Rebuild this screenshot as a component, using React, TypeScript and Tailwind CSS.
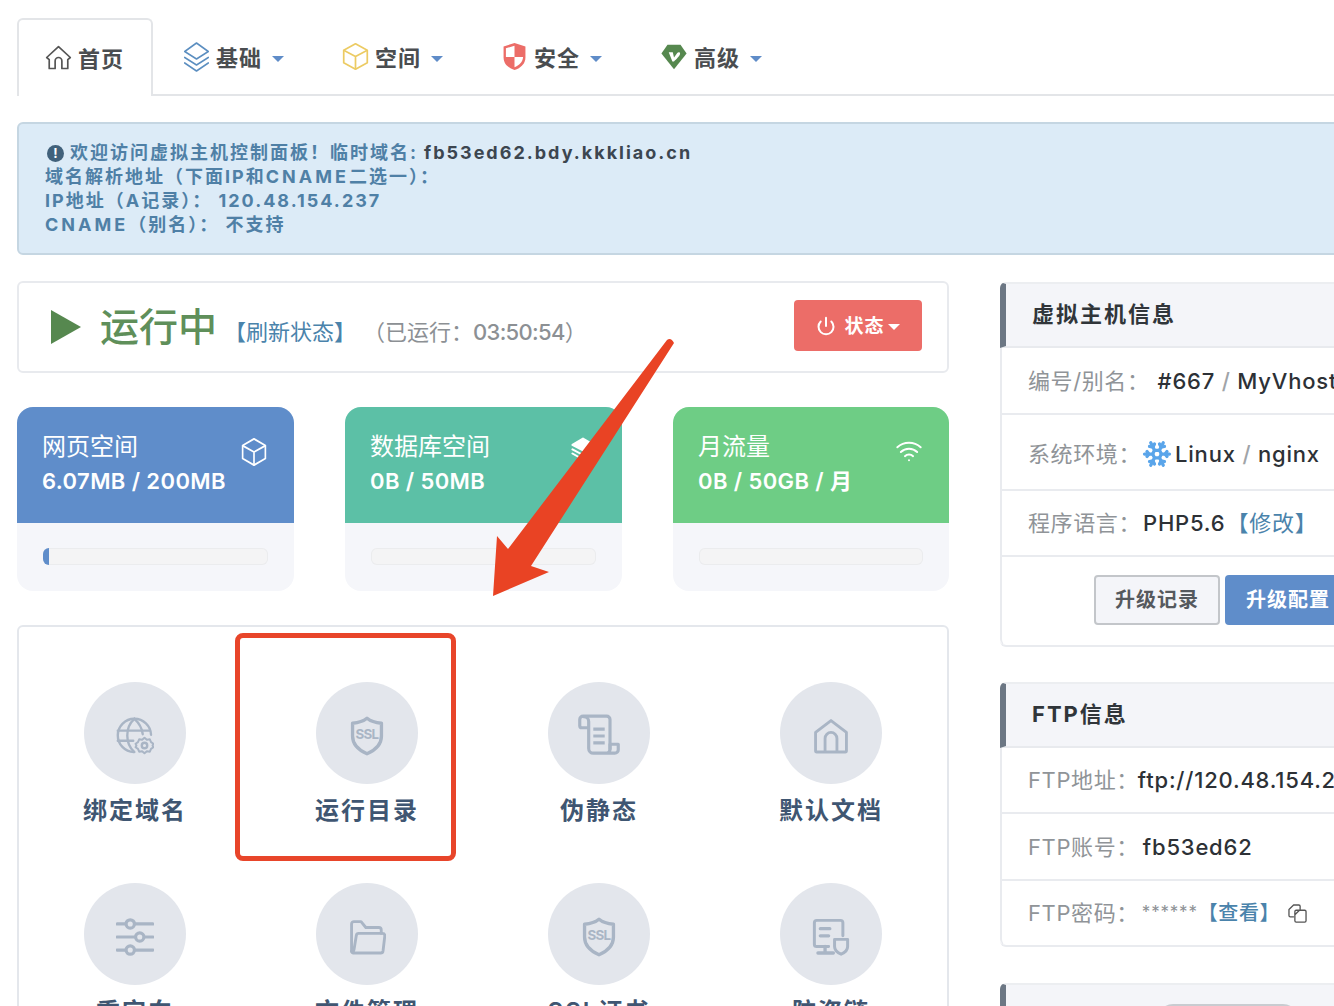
import type { ReactNode } from "react";
import { Power, Snowflake, Wifi } from "lucide-react";

const FONT = "font-['Inter','Noto_Sans_CJK_SC',sans-serif]";

type IconProps = { className?: string };

function Svg({ className, children, sw = 2 }: IconProps & { children: ReactNode; sw?: number }) {
  return (
    <svg
      viewBox="0 0 32 32"
      preserveAspectRatio="none"
      fill="none"
      stroke="currentColor"
      strokeWidth={sw}
      strokeLinecap="round"
      strokeLinejoin="round"
      className={className}
    >
      {children}
    </svg>
  );
}

const HomeIcon = ({ className }: IconProps) => (
  <Svg className={className} sw={2}>
    <path d="M2 16 16 3l14 13-3 2.600V29h-7v-9a4 4 0 0 0-8 0v9H5V18.600Z" />
  </Svg>
);

const LayersIcon = ({ className }: IconProps) => (
  <Svg className={className} sw={1.7}>
    <path d="M16 2 29 10.500 16 18 3 10.500Z" />
    <path d="M3 16.500 16 24l13-7.500" />
    <path d="M3 22 16 30l13-8" />
  </Svg>
);

const DatabaseIcon = ({ className }: IconProps) => (
  <Svg className={className} sw={2.600}>
    <path d="M16 2 29 10.500 16 18 3 10.500Z" fill="currentColor" />
    <path d="M3 16.500 16 24l13-7.500" />
    <path d="M3 22 16 30l13-8" />
  </Svg>
);

const BoxIcon = ({ className }: IconProps) => (
  <Svg className={className} sw={1.900}>
    <path d="M16 2 29 9v14l-13 7-13-7V9Z" />
    <path d="M3.500 9.500 16 16l12.500-6.500M16 16v13.500" />
  </Svg>
);

function ShieldHalfIcon({ className }: IconProps) {
  return (
    <svg viewBox="0 0 32 32" preserveAspectRatio="none" className={className}>
      <path d="M16 1 30 5v12c0 7-6 11.500-14 14C8 28.500 2 24 2 17V5Z" fill="#ec6d68" />
      <path d="M16 4 5 7v9.500H16ZM16 16.500h11c-.4 5.500-5 9-11 11.300Z" fill="#fff" />
    </svg>
  );
}

function GemIcon({ className }: IconProps) {
  return (
    <svg viewBox="0 0 32 32" preserveAspectRatio="none" className={className}>
      <path d="M8 2h16l7.500 10L16 30 .5 12Z" fill="#56884f" />
      <path d="M9.500 10.500h5l1.500 6 4-5c1-1.200 3.500-1.200 3.500.5 0 2.500-5 7-7.500 9h-2Z" fill="#fff" />
    </svg>
  );
}

const Caret = ({ className = "border-t-[#5f8cc8]" }: IconProps) => (
  <span className={`inline-block h-0 w-0 border-x-[6px] border-t-[6px] border-x-transparent ${className}`} />
);

const GlobeGearIcon = ({ className }: IconProps) => (
  <Svg className={className} sw={2}>
    <path d="M15 29.500A14 14 0 1 1 29.500 15" />
    <path d="M1.500 11.500h27M1.500 20h13" />
    <path d="M15.500 1.500c-8 7-8 21 0 28M15.500 1.500c4.500 4 6.500 8.500 7 13" />
    <circle cx="24" cy="24" r="2.300" />
    <path
      strokeWidth={1.7}
      d="m24 17.500 2 1.700 2.500-.4 1 2.300 2 1.400-.7 1.500.7 1.500-2 1.400-1 2.300-2.500-.4-2 1.700-2-1.700-2.500.4-1-2.300-2-1.400.7-1.500-.7-1.500 2-1.400 1-2.300 2.500.4Z"
    />
  </Svg>
);

function SslShieldIcon({ className }: IconProps) {
  return (
    <svg viewBox="0 0 32 36" className={className}>
      <path
        d="M16 2c3 2.500 7 4 13 4.500V18c0 7.500-5 12.500-13 16C8 30.500 3 25.500 3 18V6.500C9 6 13 4.500 16 2Z"
        fill="none"
        stroke="currentColor"
        strokeWidth="3"
        strokeLinejoin="round"
      />
      <text
        x="16"
        y="21"
        textAnchor="middle"
        fill="currentColor"
        fontSize="12"
        fontWeight="700"
        letterSpacing="-0.6"
        fontFamily="Inter, sans-serif"
      >
        SSL
      </text>
    </svg>
  );
}

const ScrollIcon = ({ className }: IconProps) => (
  <Svg className={className} sw={2.300}>
    <path d="M8 10H3.500A1.500 1.500 0 0 1 2 8.500V4a2.500 2.500 0 0 1 2.500-2.500h17A2.500 2.500 0 0 1 24 4v21.500" />
    <path d="M5 2c2 0 3.500 1.300 3.500 3.500v19.500c0 2 1.500 3.500 3.500 3.500h15.500a2.500 2.500 0 0 0 2.500-2.500V22h-6v3.500c0 1.800-1 3-3 3" />
    <path d="M13 11h6M13 16h6M13 21h6" strokeLinecap="square" />
  </Svg>
);

const HouseIcon = ({ className }: IconProps) => (
  <Svg className={className} sw={2.400}>
    <path d="M16 3 29 13v15.500a1 1 0 0 1-1 1H4a1 1 0 0 1-1-1V13Z" />
    <path d="M11 29V18a5 5 0 0 1 10 0v11" />
  </Svg>
);

const SlidersIcon = ({ className }: IconProps) => (
  <Svg className={className} sw={2.700}>
    <circle cx="12" cy="5" r="3.500" />
    <path d="M1 5h7M16 5h15" />
    <circle cx="20" cy="16" r="3.500" />
    <path d="M1 16h15M24 16h7" />
    <circle cx="12" cy="27" r="3.500" />
    <path d="M1 27h7M16 27h15" />
  </Svg>
);

const FolderIcon = ({ className }: IconProps) => (
  <Svg className={className} sw={2.400}>
    <path d="M3 28V5a2 2 0 0 1 2-2h6l4 5h11a2 2 0 0 1 2 2v3" />
    <path d="M3 28a1.500 1.500 0 0 0 1.500 1.500h23a2 2 0 0 0 2-1.700L31 15a2 2 0 0 0-2-2H9a2 2 0 0 0-2 1.700L5 27c-.2 1.200-2 1.500-2 1Z" />
  </Svg>
);

const ServerShieldIcon = ({ className }: IconProps) => (
  <Svg className={className} sw={2.500}>
    <path d="M14 24H4a2 2 0 0 1-2-2V4a2 2 0 0 1 2-2h20a2 2 0 0 1 2 2v11" />
    <path d="M7 9h8M7 15h7M11 24v5M5 29.500h13" strokeWidth={2.800} />
    <path d="M19 18h11v6c0 3-2 5-5.500 6.500C21 29 19 27 19 24Z" />
  </Svg>
);

const CopyIcon = ({ className }: IconProps) => (
  <Svg className={className} sw={2}>
    <path d="M10 21H5a2 2 0 0 1-2-2V10l7-7h8a2 2 0 0 1 2 2v5" />
    <path d="M12 13a2 2 0 0 1 2-2h5l-7 7ZM14 11h13a2 2 0 0 1 2 2v14a2 2 0 0 1-2 2H14a2 2 0 0 1-2-2v-9" />
  </Svg>
);

const tabs = [
  { label: "基础", icon: <LayersIcon className="-mx-[2px] h-[32px] w-[29px] text-[#5b8ec0]" /> },
  { label: "空间", icon: <BoxIcon className="-mx-[2px] h-[29px] w-[29px] text-[#eccb63]" /> },
  { label: "安全", icon: <ShieldHalfIcon className="h-[29px] w-[25px]" /> },
  { label: "高级", icon: <GemIcon className="h-[28px] w-[26px]" /> },
];

const stats = [
  { title: "网页空间", value: "6.07MB / 200MB", bg: "bg-[#5f8dca]", icon: <BoxIcon className="h-[30px] w-[28px]" />, fill: true },
  { title: "数据库空间", value: "0B / 50MB", bg: "bg-[#5cc0a6]", icon: <DatabaseIcon className="h-[24px] w-[26px]" />, fill: false },
  { title: "月流量", value: "0B / 50GB / 月", bg: "bg-[#6ecd85]", icon: <Wifi className="h-[28px] w-[28px]" strokeWidth={1.7} />, fill: false },
];

const menu = [
  { label: "绑定域名", icon: <GlobeGearIcon className="h-[38px] w-[38px]" /> },
  { label: "运行目录", icon: <SslShieldIcon className="h-[40px] w-[36px]" /> },
  { label: "伪静态", icon: <ScrollIcon className="h-[44px] w-[44px]" /> },
  { label: "默认文档", icon: <HouseIcon className="h-[38px] w-[38px]" /> },
  { label: "重定向", icon: <SlidersIcon className="h-[38px] w-[38px]" /> },
  { label: "文件管理", icon: <FolderIcon className="h-[38px] w-[38px]" /> },
  { label: "SSL证书", icon: <SslShieldIcon className="h-[40px] w-[36px]" /> },
  { label: "防盗链", icon: <ServerShieldIcon className="h-[38px] w-[38px]" /> },
];

function PanelHeader({ children }: { children: ReactNode }) {
  return (
    <div className="flex h-[66px] items-center rounded-tl-[6px] border-t-2 border-b-2 border-l-[6px] border-t-[#eceef1] border-b-[#e8eaee] border-l-[#6c7784] bg-[#f4f5f9] pb-px pl-[26px] text-[22px] font-bold tracking-[2px] text-[#30353a]">
      {children}
    </div>
  );
}

function Row({ h, label, children }: { h: string; label: string; children: ReactNode }) {
  return (
    <div className={`flex items-center border-b-2 border-[#e9ebef] pl-[26px] text-[22px] tracking-[0.8px] text-[#2d3136] ${h}`}>
      <span className="tracking-[0.6px] text-[#909498]">{label}</span>
      {children}
    </div>
  );
}

export default function App() {
  return (
    <div className={`relative h-[1006px] w-[1334px] overflow-hidden bg-white pt-[18px] pl-[17px] ${FONT}`}>
      <div className="flex h-[78px] w-[1400px] border-b-2 border-[#e3e5e8] text-[22px] font-semibold tracking-[1px] text-[#4a4d50]">
        <div className="flex h-[78px] w-[136px] items-center gap-[6px] rounded-t-[6px] border-x-2 border-t-2 border-[#e3e5e8] bg-white pt-[2px] pl-[26px]">
          <HomeIcon className="-mt-[3px] h-[27px] w-[27px] text-[#555]" />
          首页
        </div>
        {tabs.map((tab) => (
          <div key={tab.label} className="flex w-[159px] items-center pt-[5px] pl-[31px]">
            <span className="-mt-[4px] flex">{tab.icon}</span>
            <span className="mr-[10px] ml-[7px]">{tab.label}</span>
            <Caret />
          </div>
        ))}
      </div>

      <div className="mt-[26px] h-[133px] w-[1400px] rounded-[6px] border-2 border-[#c5d6e2] bg-[#dcebf7] pt-[17px] pl-[26px] text-[18px] leading-[24px] font-bold tracking-[2px] text-[#4f80a6]">
        <div className="flex items-center">
          <span className="mr-[6px] ml-[2px] flex h-[17px] w-[17px] items-center justify-center rounded-full bg-[#41617b] text-[13px] tracking-normal text-white">
            !
          </span>
          欢迎访问虚拟主机控制面板！临时域名:
          <span className="ml-[6px] text-[#3c4650]">fb53ed62.bdy.kkkliao.cn</span>
        </div>
        <div>
          域名解析地址（下面IP和<span className="tracking-[3px]">CNAME</span>二选一）：
        </div>
        <div>IP地址（A记录）： 120.48.154.237</div>
        <div>
          <span className="tracking-[3px]">CNAME</span>（别名）： 不支持
        </div>
      </div>

      <div className="mt-[26px] flex gap-[51px]">
        <div className="w-[932px] shrink-0">
          <div className="flex h-[92px] items-center rounded-[6px] border-2 border-[#e8eaee] pr-[25px] pl-[32px]">
            <span className="h-0 w-0 border-y-[17px] border-l-[30px] border-y-transparent border-l-[#56884f]" />
            <span className="ml-[19px] text-[39px] font-medium text-[#5f8f5a]">运行中</span>
            <span className="mt-[10px] ml-[7px] text-[22px] text-[#4a83ab]">【刷新状态】</span>
            <span className="mt-[10px] ml-[7px] text-[22px] text-[#8c9094]">
              （已运行：<span className="font-medium tracking-[-0.7px]">03:50:54</span>）
            </span>
            <div className="mb-[3px] ml-auto flex h-[51px] w-[128px] items-center justify-center gap-[8px] rounded-[4px] bg-[#ec6d68] text-[19px] font-bold text-white">
              <Power className="h-[20px] w-[20px]" strokeWidth={2.4} />
              <span className="flex items-center gap-[3px] pt-[3px] tracking-[1px]">
                状态
                <Caret className="border-t-white" />
              </span>
            </div>
          </div>

          <div className="mt-[34px] flex gap-[51px]">
            {stats.map((stat) => (
              <div key={stat.title} className="h-[184px] w-[277px] overflow-hidden rounded-[16px] bg-[#f5f6fa] last:w-[276px]">
                <div className={`flex h-[116px] justify-between pt-[25px] pr-[26px] pl-[25px] text-white ${stat.bg}`}>
                  <div>
                    <div className="text-[24px] leading-[30px]">{stat.title}</div>
                    <div className="mt-[5px] text-[22px] leading-[28px] font-semibold tracking-[0.4px]">{stat.value}</div>
                  </div>
                  <div className="pt-[5px]">{stat.icon}</div>
                </div>
                <div className="mx-[26px] mt-[25px] h-[17px] overflow-hidden rounded-[6px] bg-[#f4f4f5] shadow-[inset_0_0_0_1px_#ebecee]">
                  {stat.fill && <div className="h-full w-[6px] bg-[#5f8dca]" />}
                </div>
              </div>
            ))}
          </div>

          <div className="mt-[34px] grid h-[500px] grid-cols-4 content-start rounded-[6px] border-2 border-[#e4e7ec]">
            {menu.map((item) => (
              <div key={item.label} className="flex h-[201px] flex-col items-center pt-[55px]">
                <div className="flex h-[102px] w-[102px] shrink-0 items-center justify-center rounded-full bg-[#e3e6ec] pt-[5px] text-[#a9b5c5]">
                  {item.icon}
                </div>
                <div className="mt-[9px] text-[24px] leading-[36px] font-semibold tracking-[2px] text-[#3f5672]">
                  {item.label}
                </div>
              </div>
            ))}
          </div>
        </div>

        <div className="mt-px w-[400px] shrink-0">
          <div className="h-[365px] rounded-[6px] border-r-2 border-b-2 border-[#e9ebef]">
            <PanelHeader>虚拟主机信息</PanelHeader>
            <div className="rounded-bl-[6px] border-l-2 border-[#e9ebef]">
              <Row h="h-[67px] pt-[2px]" label="编号/别名：">
                <span className="ml-[8px] font-medium whitespace-nowrap">#667 <span className="text-[#a0a4a8]">/</span> MyVhost</span>
              </Row>
              <Row h="h-[76px] pt-[4px]" label="系统环境：">
                <Snowflake className="mr-[3px] ml-[1px] h-[30px] w-[30px] text-[#5aa5ea]" strokeWidth={2.6} />
                <span className="font-medium whitespace-nowrap">Linux <span className="text-[#a0a4a8]">/</span> nginx</span>
              </Row>
              <Row h="h-[66px]" label="程序语言：">
                <span className="ml-[2px] font-medium">PHP5.6</span>
                <span className="ml-[1px] text-[#4a83ab]">【修改】</span>
              </Row>
              <div className="flex h-[88px] items-start gap-[5px] pt-[18px] pl-[92px] text-[20px] font-bold tracking-[1px]">
                <div className="flex h-[50px] w-[126px] items-center justify-center rounded-[4px] border-2 border-[#c3c6ca] bg-[#f4f5f9] text-[#55595e]">
                  升级记录
                </div>
                <div className="flex h-[50px] w-[126px] shrink-0 items-center justify-center rounded-[4px] bg-[#5f8dca] text-white">
                  升级配置
                </div>
              </div>
            </div>
          </div>

          <div className="mt-[35px] h-[265px] rounded-[6px] border-r-2 border-b-2 border-[#e9ebef]">
            <PanelHeader>FTP信息</PanelHeader>
            <div className="rounded-bl-[6px] border-l-2 border-[#e9ebef]">
              <Row h="h-[66px] pt-px" label="FTP地址：">
                <span className="-ml-px font-medium whitespace-nowrap">ftp://120.48.154.237</span>
              </Row>
              <Row h="h-[67px] pt-px" label="FTP账号：">
                <span className="ml-[4px] font-medium">fb53ed62</span>
              </Row>
              <div className="flex h-[64px] items-center pl-[26px] text-[22px] tracking-[0.6px] text-[#909498]">
                FTP密码：
                <span className="ml-[3px] text-[17px] tracking-[0.8px] text-[#8c9094]">******</span>
                <span className="text-[20px] font-medium text-[#4a83ab]">【查看】</span>
                <CopyIcon className="ml-[7px] h-[21px] w-[21px] text-[#555]" />
              </div>
            </div>
          </div>

          <div className="mt-[36px]">
            <div className="flex h-[66px] items-start rounded-tl-[6px] border-t-2 border-l-[6px] border-t-[#eceef1] border-l-[#6c7784] bg-[#f4f5f9] pt-[16px] pl-[26px]">
              <span className="text-[22px] font-bold tracking-[2px] text-[#30353a]">数据库信息</span>
              <span className="mt-[3px] ml-[6px] h-[30px] w-[140px] rounded-full bg-[#c9ccd1]" />
            </div>
          </div>
        </div>
      </div>

      {/* red annotations drawn over the screenshot */}
      <div className="absolute top-[633px] left-[235px] h-[228px] w-[221px] rounded-[8px] border-[5px] border-[#e8452a]" />
      <svg className="absolute top-0 left-0 h-[1006px] w-[1334px]" viewBox="0 0 1334 1006">
        <path
          d="M493 596 497 536 508 549 667 340Q671 337 674 343L531 566 549 572Z"
          fill="#e94324"
        />
      </svg>
    </div>
  );
}
